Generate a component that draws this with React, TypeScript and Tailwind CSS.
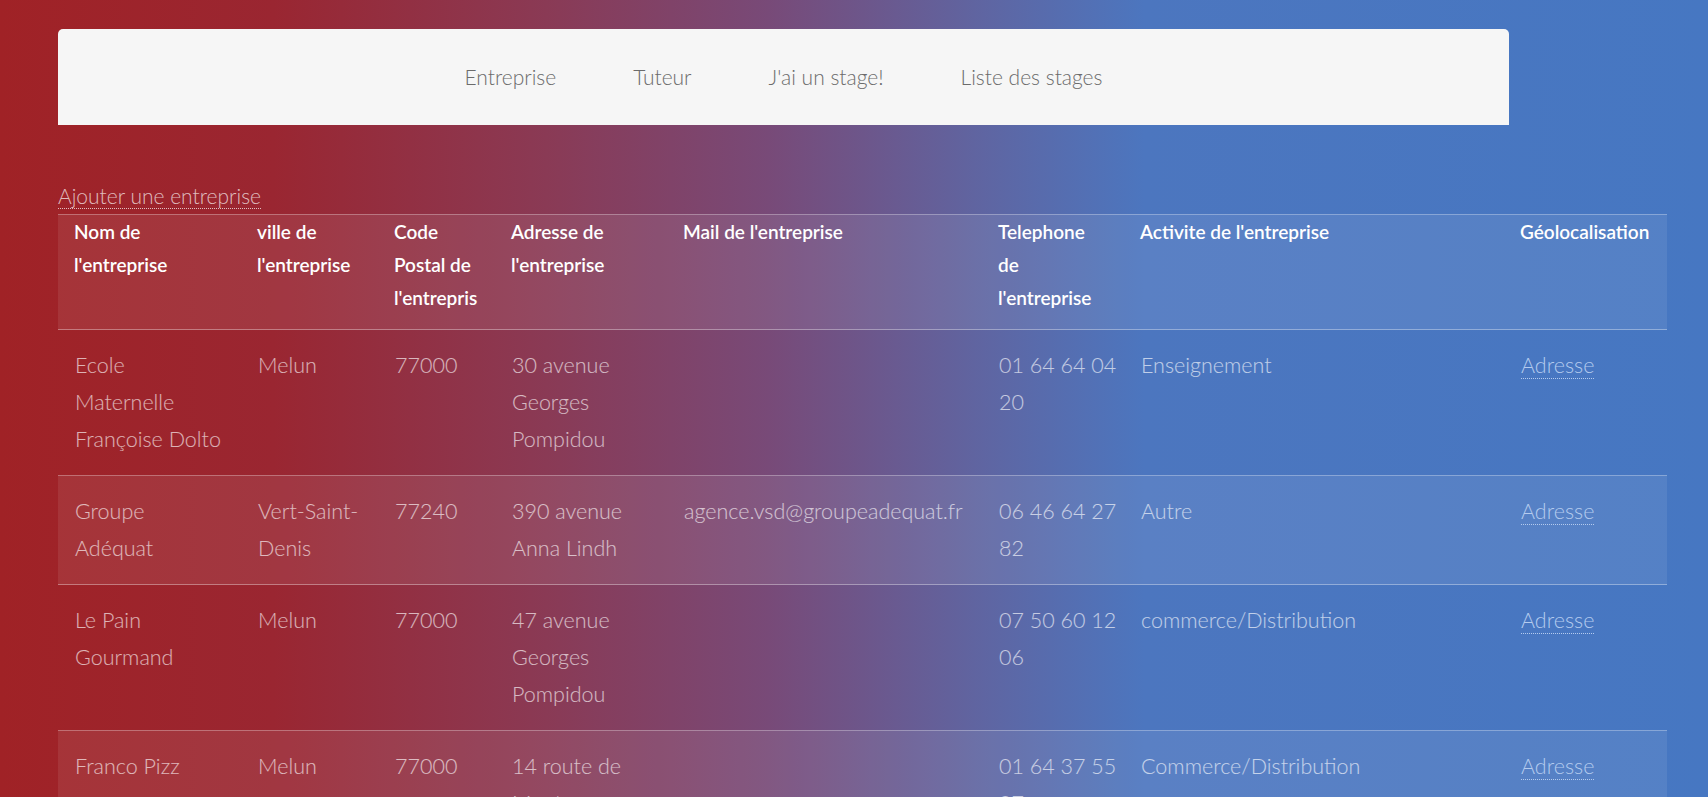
import React from "react";

type Row = string[][];

const headers: string[][] = [
  ["Nom de", "l'entreprise"],
  ["ville de", "l'entreprise"],
  ["Code", "Postal de", "l'entrepris"],
  ["Adresse de", "l'entreprise"],
  ["Mail de l'entreprise"],
  ["Telephone", "de", "l'entreprise"],
  ["Activite de l'entreprise"],
  ["Géolocalisation"],
];

const rows: Row[] = [
  [
    ["Ecole", "Maternelle", "Françoise Dolto"],
    ["Melun"],
    ["77000"],
    ["30 avenue", "Georges", "Pompidou"],
    [],
    ["01 64 64 04", "20"],
    ["Enseignement"],
  ],
  [
    ["Groupe", "Adéquat"],
    ["Vert-Saint-", "Denis"],
    ["77240"],
    ["390 avenue", "Anna Lindh"],
    ["agence.vsd@groupeadequat.fr"],
    ["06 46 64 27", "82"],
    ["Autre"],
  ],
  [
    ["Le Pain", "Gourmand"],
    ["Melun"],
    ["77000"],
    ["47 avenue", "Georges", "Pompidou"],
    [],
    ["07 50 60 12", "06"],
    ["commerce/Distribution"],
  ],
  [
    ["Franco Pizz"],
    ["Melun"],
    ["77000"],
    ["14 route de", "Montereau"],
    [],
    ["01 64 37 55", "07"],
    ["Commerce/Distribution"],
  ],
];

const colWidths = ["w-[183px]", "w-[137px]", "w-[117px]", "w-[172px]", "w-[315px]", "w-[142px]", "w-[380px]", "w-[163px]"];

const navLinks = ["Entreprise", "Tuteur", "J'ai un stage!", "Liste des stages"];

export default function App() {
  return (
    <div className="min-h-screen w-full overflow-hidden bg-[linear-gradient(90deg,#a02226_0%,#9a2631_16%,#8a3a55_32%,#784a78_45%,#6064a0_57%,#4c76bf_67%,#4677c2_100%)] pl-[58px] font-['Lato',sans-serif] font-light">
      {/* menu */}
      <div className="mt-[29px] w-[1451px] h-[96px] rounded-t-[5px] bg-[#f6f6f6] flex items-center justify-center gap-[77px]">
        {navLinks.map((link) => (
          <a key={link} className="text-[21px] text-[#6b6b6b] cursor-pointer">
            {link}
          </a>
        ))}
      </div>

      <div className="mt-[52px] leading-[37px] text-[21px]">
        <a className="text-white/70 border-b border-dotted border-white/70 cursor-pointer">
          Ajouter une entreprise
        </a>
      </div>

      <table className="table-fixed w-[1609px] border-collapse border-t border-white/35">
        <colgroup>
          {colWidths.map((w, i) => (
            <col key={i} className={w} />
          ))}
        </colgroup>
        <tbody>
          <tr className="bg-white/[0.08] border-b border-white/35">
            {headers.map((h, i) => (
              <th
                key={i}
                className="text-left align-top px-4 pt-0 pb-[15px] text-[19px] leading-[33px] font-semibold text-white"
              >
                {h.map((line, j) => (
                  <div key={j} className="whitespace-nowrap">
                    {line}
                  </div>
                ))}
              </th>
            ))}
          </tr>
          {rows.map((row, i) => (
            <tr
              key={i}
              className={`border-b border-white/35 ${i % 2 === 1 ? "bg-white/[0.08]" : ""}`}
            >
              {row.map((cell, j) => (
                <td
                  key={j}
                  className="align-top pl-[17px] pr-4 py-[17px] text-[21.5px] leading-[37px] text-white/65"
                >
                  {cell.map((line, k) => (
                    <div key={k} className="whitespace-nowrap">
                      {line}
                    </div>
                  ))}
                </td>
              ))}
              <td className="align-top pl-[17px] pr-4 py-[17px] text-[21.5px] leading-[37px]">
                <a className="text-[#b4cbee] border-b border-dotted border-[#b4cbee] cursor-pointer">
                  Adresse
                </a>
              </td>
            </tr>
          ))}
        </tbody>
      </table>
    </div>
  );
}
